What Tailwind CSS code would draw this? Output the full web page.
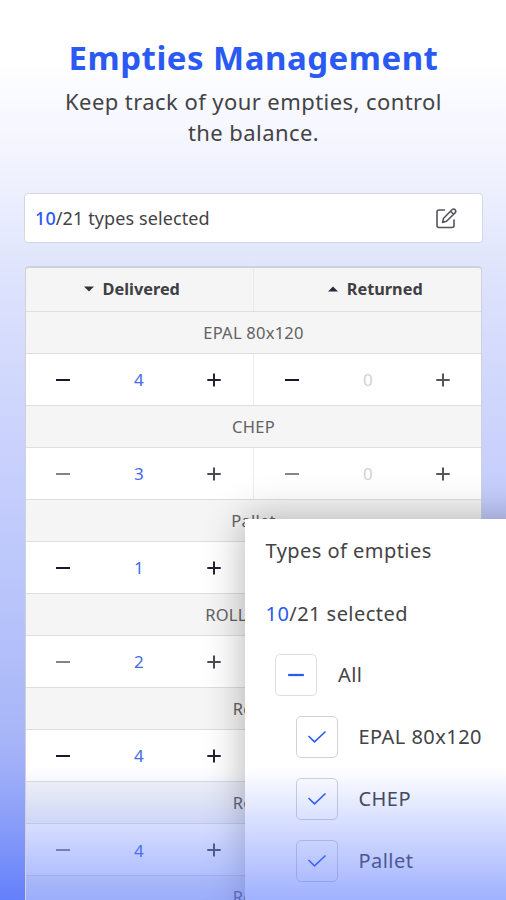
<!DOCTYPE html>
<html lang="en">
<head>
<meta charset="utf-8">
<meta name="viewport" content="width=device-width">
<title>Empties Management</title>
<script src="https://cdn.jsdelivr.net/npm/@tailwindcss/browser@4"></script>
</head>
<body class="font-['Noto_Sans',sans-serif] text-[#434346]">
<svg class="hidden">
  <symbol id="minus" viewBox="0 0 16 16"><path d="M1 8H15" stroke="currentColor" stroke-width="2"/></symbol>
  <symbol id="plus" viewBox="0 0 16 16"><path d="M1.3 8H14.7M8 1.5V14.5" stroke="currentColor" stroke-width="2"/></symbol>
  <symbol id="check" viewBox="0 0 20 16"><path d="M1.5 7L7.5 12.8L18.5 2.5" fill="none" stroke="currentColor" stroke-width="1.6"/></symbol>
</svg>
<main class="relative w-[506px] h-[900px] overflow-hidden bg-[linear-gradient(180deg,#ffffff_0px,#ffffff_60px,#f8f9ff_110px,#eff1fe_180px,#e2e7fc_250px,#d4dbfc_350px,#c6cffc_480px,#b6c2fa_620px,#a7b5f8_740px,#97a8f8_790px,#7f95f9_845px,#6480fb_900px)]">
  <header class="pt-[36px] pl-px text-center">
    <h1 class="text-[33px] leading-[44px] font-bold text-[#2a5af2] tracking-[0.5px]">Empties Management</h1>
    <p class="mt-[6px] text-[22px] leading-[31px] tracking-[0.43px]">Keep track of your empties, control<br>the balance.</p>
  </header>

  <section class="mt-[45px] ml-[24px] w-[459px] h-[50px] flex items-center justify-between bg-white border border-[#d4d6e2] rounded-[4px] pl-[10px] pr-[24px] text-[18px] tracking-[0.1px]">
    <span><span class="text-[#2a5af2] font-medium">10</span>/21 types selected</span>
    <svg class="size-[23px]" viewBox="0 0 23 23" fill="none" stroke="#55555b" stroke-width="1.6" stroke-linecap="round" stroke-linejoin="round"><path d="M9.500 3H4Q2 3 2 5V18.500Q2 20.500 4 20.500H17Q19 20.500 19 18.500V13"/><path d="M17 2.800Q18.500 1.300 20.100 2.700Q21.500 4.300 20 5.900L11.500 14.300L7.500 15.400L8.600 11.300ZM15.600 4.300L18.500 7.300"/></svg>
  </section>

  <section class="mt-[23px] ml-[25px] w-[457px] h-[640px] border-x-[1.5px] border-t-2 border-[#d0d1da] rounded-t-[4px] bg-[#f5f5f5] overflow-hidden">
    <div class="grid grid-cols-2 h-[42.600px] text-[16.300px] font-bold text-[#404044]">
      <div class="flex items-center justify-center gap-[9px] border-r border-[#e9e9e9] pr-[15px]"><svg class="w-[10px] h-[6px]" viewBox="0 0 10 6"><path d="M0 .5H10L5 5.500Z" fill="#333"/></svg><span>Delivered</span></div>
      <div class="flex items-center justify-center gap-[9px] pl-[16px]"><svg class="w-[10px] h-[6px]" viewBox="0 0 10 6"><path d="M0 5.500H10L5 .5Z" fill="#2b2b38"/></svg><span>Returned</span></div>
    </div>
    <div id="rows"></div>
  </section>

  <aside class="absolute left-[245px] top-[519px] w-[300px] h-[420px] bg-white shadow-[0_0_38px_rgba(0,0,0,0.3)] pl-[20.500px] text-[20px] leading-[30px] tracking-[0.45px]">
    <h2 class="mt-[17px]">Types of empties</h2>
    <p class="mt-[33px]"><span class="text-[#2a5af2]">10</span>/21 selected</p>
    <div class="mt-[25px] ml-[9.500px] flex items-center h-[42px]"><span class="size-[42px] mr-[21px] flex items-center justify-center border-[1.5px] border-[#dedee2] rounded-[5px]"><svg class="size-[18px] text-[#2a5af2]"><use href="#minus"/></svg></span><span>All</span></div>
    <div class="mt-[20px] ml-[30.500px] flex items-center h-[42px]"><span class="size-[42px] mr-[20.500px] flex items-center justify-center border-[1.5px] border-[#d2d2d5] rounded-[5px]"><svg class="w-[20px] h-[16px] text-[#2a5af2]"><use href="#check"/></svg></span><span>EPAL 80x120</span></div>
    <div class="mt-[20px] ml-[30.500px] flex items-center h-[42px]"><span class="size-[42px] mr-[20.500px] flex items-center justify-center border-[1.5px] border-[#d2d2d5] rounded-[5px]"><svg class="w-[20px] h-[16px] text-[#2a5af2]"><use href="#check"/></svg></span><span>CHEP</span></div>
    <div class="mt-[20px] ml-[30.500px] flex items-center h-[42px]"><span class="size-[42px] mr-[20.500px] flex items-center justify-center border-[1.5px] border-[#d2d2d5] rounded-[5px]"><svg class="w-[20px] h-[16px] text-[#2a5af2]"><use href="#check"/></svg></span><span>Pallet</span></div>
  </aside>

  <!-- bottom fade over the table and the panel -->
  <div class="absolute left-[26px] right-0 top-[768px] h-[132px] bg-linear-to-b from-[#5a78ff]/0 to-[#5a78ff]/58"></div>
</main>
<script>
const data = [["EPAL 80x120",4,0],["CHEP",3,0],["Pallet",1],["ROLL 60x80",2],["Rolly",4],["Rolly",4],["Rolly"]];
const ico = (n, c) => `<span class="flex justify-center ${c}"><svg class="size-[16px]"><use href="#${n}"/></svg></span>`;
document.getElementById('rows').innerHTML = data.map(([name, d, r], i) => {
  const m = i % 2 ? 'text-[#858589]' : 'text-[#17172f]';
  const p = i % 2 ? 'text-[#4b4b55]' : 'text-[#23232f]';
  const nudge = i > 2 ? 'pr-[3px]' : '';
  const label = `<div class="h-[42px] border-t-[1.5px] border-[#dedede] flex items-center justify-center pt-[2px] ${nudge} text-[16.500px] tracking-[0.25px] text-[#626264]">${name}</div>`;
  if (d === undefined) return label;
  const right = r === undefined ? '' : `${ico('minus', m)}<span class="text-[#d2d2d2]">${r}</span>${ico('plus', 'text-[#55555e]')}`;
  return label + `
  <div class="h-[52.130px] border-t-[1.5px] border-[#dedede] bg-white grid grid-cols-2 text-[17px] text-center">
    <div class="grid grid-cols-3 items-center border-r border-[#ececec] pr-px pt-px">${ico('minus', m + ' pr-[2px]')}<span class="text-[#4468ee]">${d}</span>${ico('plus', p)}</div>
    <div class="grid grid-cols-3 items-center pl-px pt-px">${right}</div>
  </div>`;
}).join('');
</script>
</body>
</html>
